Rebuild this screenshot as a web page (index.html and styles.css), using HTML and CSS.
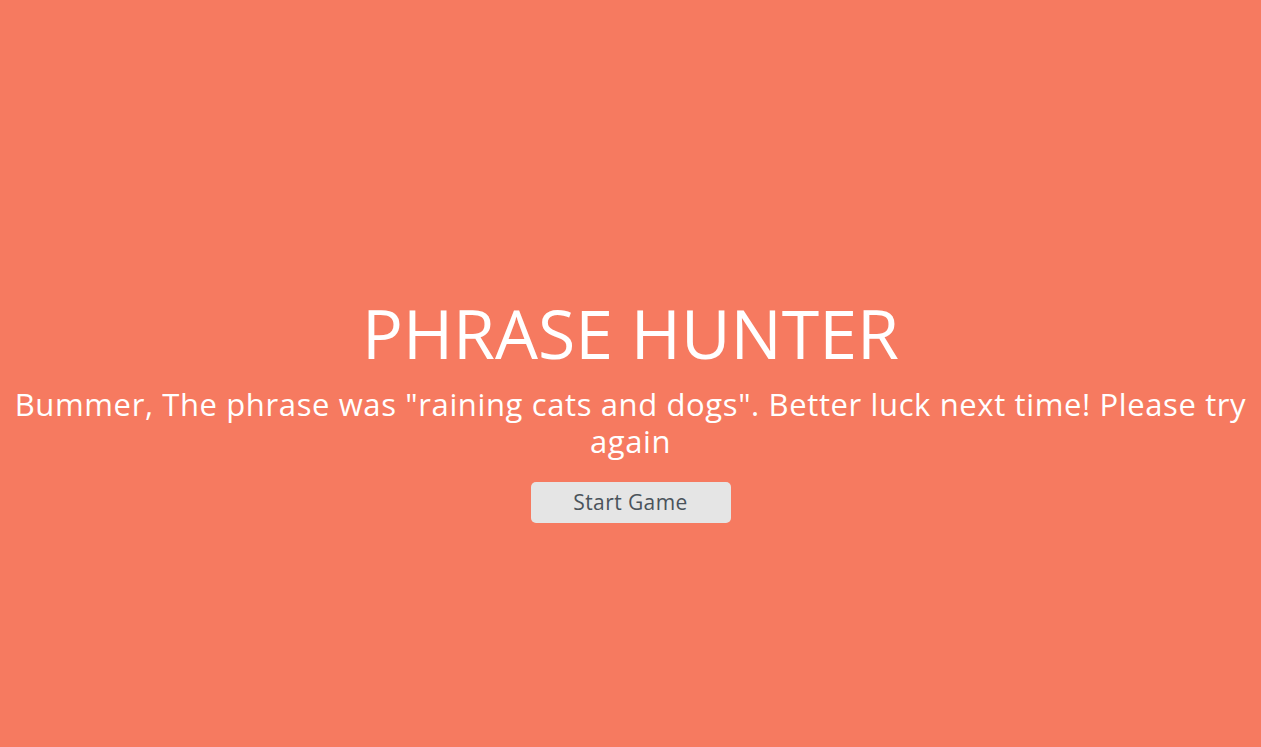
FILE: index.html
```html
<!DOCTYPE html>
<html lang="en">
<head>
<meta charset="utf-8">
<title>Phrase Hunter</title>
<link rel="stylesheet" href="styles.css">
</head>
<body>
<div class="overlay lose">
  <h2 class="title">PHRASE HUNTER</h2>
  <h1 class="game-over-message">Bummer, The phrase was "raining cats and dogs". Better luck next time! Please try again</h1>
  <button class="btn-reset" type="button">Start Game</button>
</div>
</body>
</html>
```

FILE: styles.css
```css
html, body {
  margin: 0;
  padding: 0;
}
body {
  font-family: "Open Sans", "DejaVu Sans", sans-serif;
  background: #f67a60;
}
.overlay {
  min-height: 100vh;
  box-sizing: border-box;
  display: flex;
  flex-direction: column;
  align-items: center;
  justify-content: center;
  text-align: center;
  color: #ffffff;
  padding: 69px 10px 0;
}
.lose {
  background: #f67a60;
}
.title {
  font-size: 68px;
  font-weight: 400;
  margin: 0;
  line-height: 78px;
  letter-spacing: 0;
}
.game-over-message {
  font-size: 31px;
  font-weight: 500;
  margin: 14px 0 22px;
  line-height: 37px;
  letter-spacing: 0.62px;
}
.btn-reset {
  width: 200px;
  height: 41px;
  border: none;
  border-radius: 5px;
  background: #e5e5e5;
  color: #4a535b;
  font-family: inherit;
  font-size: 21px;
  letter-spacing: 0.4px;
  cursor: pointer;
}
```
